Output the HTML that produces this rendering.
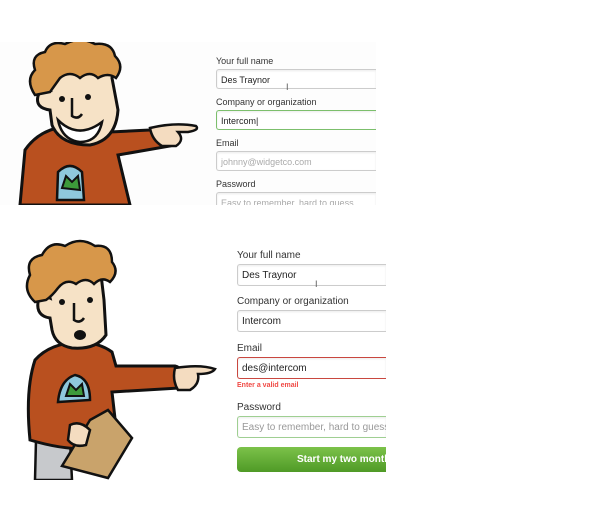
<!DOCTYPE html>
<html><head><meta charset="utf-8"><style>
*{margin:0;padding:0;box-sizing:border-box}
body{width:590px;height:523px;background:#fff;position:relative;overflow:hidden;font-family:"Liberation Sans",Arial,sans-serif}
.p{position:absolute;overflow:hidden}
.l{position:absolute;color:#333;white-space:nowrap}
.i{position:absolute;border:1px solid #ccc;border-right:none;border-radius:3px 0 0 3px;background:#fff;color:#222;white-space:nowrap;overflow:hidden;box-shadow:inset 0 1px 2px rgba(0,0,0,.08)}
svg{position:absolute}
</style></head><body>
<div class="p" style="left:0;top:42px;width:376px;height:163px;background:#fdfdfd">
<svg width="376" height="163" viewBox="0 42 376 163" style="left:0;top:0">
 <path d="M20 205 L25 150 Q40 128 70 126 Q95 125 110 132 L150 130 Q165 128 172 134 L170 146 L118 155 L130 205 Z" fill="#b9501f" stroke="#111" stroke-width="3"/>
 <path d="M150 128 Q175 122 196 126 Q200 130 188 132 L178 132 Q185 140 176 146 L162 146 Q152 140 150 128Z" fill="#f4dcc0" stroke="#111" stroke-width="2.5"/>
 <path d="M57 200 L58 172 Q70 160 82 172 L84 200 Z" fill="#8fc8dc" stroke="#111" stroke-width="2.5"/>
 <path d="M62 188 L66 176 L72 182 L78 176 L80 190 Z" fill="#3d9a3a" stroke="#111" stroke-width="2"/>
 <path d="M45 80 Q42 58 60 55 Q80 45 100 55 Q118 60 112 78 L118 110 Q116 140 90 145 Q60 145 52 125 L50 110 Q35 108 38 96 Q40 88 50 90Z" fill="#f6e2c6" stroke="#111" stroke-width="3"/>
 <path d="M35 95 Q25 80 35 70 Q30 55 45 52 Q50 40 65 44 Q80 36 95 44 Q112 42 115 56 Q125 66 116 78 Q108 72 98 78 Q90 70 80 78 Q70 70 60 78 Q55 85 50 92 Z" fill="#d7974a" stroke="#111" stroke-width="2.5"/>
 <circle cx="62" cy="99" r="3" fill="#111"/><circle cx="88" cy="97" r="3" fill="#111"/>
 <path d="M72 98 L72 116 Q78 120 82 114" fill="none" stroke="#111" stroke-width="2.5"/>
 <path d="M58 120 Q78 140 102 122 Q98 142 80 142 Q62 140 58 120Z" fill="#fff" stroke="#111" stroke-width="2.5"/>
</svg>
<div class="l" style="left:216px;top:14px;font-size:9px">Your full name</div>
<div class="i" style="left:216px;top:27px;width:160px;height:20px;font-size:9px;padding:5px 0 0 4px">Des Traynor</div>
<div class="l" style="left:286px;top:40px;font-size:9px;color:#555">I</div>
<div class="l" style="left:216px;top:55px;font-size:9px">Company or organization</div>
<div class="i" style="left:216px;top:68px;width:160px;height:20px;font-size:9px;padding:5px 0 0 4px;border-color:#7cbf6c">Intercom|</div>
<div class="l" style="left:216px;top:96px;font-size:9px">Email</div>
<div class="i" style="left:216px;top:109px;width:160px;height:20px;font-size:9px;padding:5px 0 0 4px;color:#aaa">johnny@widgetco.com</div>
<div class="l" style="left:216px;top:137px;font-size:9px">Password</div>
<div class="i" style="left:216px;top:150px;width:160px;height:20px;font-size:9px;padding:5px 0 0 4px;color:#aaa">Easy to remember, hard to guess</div>
</div>

<div class="p" style="left:0;top:232px;width:386px;height:248px;background:#fff">
<svg width="386" height="248" viewBox="0 232 386 248" style="left:0;top:0">
 <path d="M35 480 L36 440 L70 440 L72 480Z" fill="#c7c9cc" stroke="#111" stroke-width="2.5"/>
 <path d="M30 440 Q25 390 35 360 Q50 343 80 342 Q100 343 112 352 L116 366 L175 366 Q185 368 180 388 L112 392 L118 445 Q80 455 30 440Z" fill="#b9501f" stroke="#111" stroke-width="3"/>
 <path d="M175 368 Q200 364 215 369 Q212 374 198 374 Q200 384 190 390 L178 390 Q172 380 175 368Z" fill="#f4dcc0" stroke="#111" stroke-width="2.5"/>
 <path d="M58 402 Q60 380 75 375 Q90 378 90 400 Z" fill="#8fc8dc" stroke="#111" stroke-width="2.5"/>
 <path d="M66 396 L70 384 L76 390 L82 384 L84 396 Z" fill="#3d9a3a" stroke="#111" stroke-width="2"/>
 <path d="M90 420 L108 410 L132 438 L108 478 L62 466 Z" fill="#c9a36b" stroke="#111" stroke-width="2.5"/>
 <path d="M70 425 Q80 420 90 430 L86 445 Q74 448 68 440Z" fill="#f4dcc0" stroke="#111" stroke-width="2.5"/>
 <path d="M48 290 Q44 270 58 266 Q80 256 100 266 L104 300 L106 335 Q96 350 72 348 Q55 345 52 330 L50 318 Q36 316 38 302 Q42 294 50 298Z" fill="#f6e2c6" stroke="#111" stroke-width="3"/>
 <path d="M35 302 Q22 290 30 275 Q25 258 42 255 Q50 240 65 246 Q80 236 95 246 Q112 244 112 262 Q120 272 110 282 Q102 276 94 284 Q86 276 76 284 Q66 278 58 288 Q52 296 46 300Z" fill="#d7974a" stroke="#111" stroke-width="2.5"/>
 <circle cx="62" cy="302" r="3" fill="#111"/><circle cx="90" cy="300" r="3" fill="#111"/>
 <path d="M74 303 L74 320 Q80 324 84 318" fill="none" stroke="#111" stroke-width="2.5"/>
 <ellipse cx="80" cy="335" rx="6" ry="5" fill="#111"/>
</svg>
<div class="l" style="left:237px;top:18px;font-size:10px">Your full name</div>
<div class="i" style="left:237px;top:32px;width:149px;height:22px;font-size:10px;padding:5px 0 0 4px">Des Traynor</div>
<div class="l" style="left:315px;top:47px;font-size:9px;color:#555">I</div>
<div class="l" style="left:237px;top:64px;font-size:10px">Company or organization</div>
<div class="i" style="left:237px;top:78px;width:149px;height:22px;font-size:10px;padding:5px 0 0 4px">Intercom</div>
<div class="l" style="left:237px;top:111px;font-size:10px">Email</div>
<div class="i" style="left:237px;top:125px;width:149px;height:22px;font-size:10px;padding:5px 0 0 4px;border-color:#c9473f">des@intercom</div>
<div class="l" style="left:237px;top:150px;font-size:7px;font-weight:bold;color:#f04a45">Enter a valid email</div>
<div class="l" style="left:237px;top:170px;font-size:10px">Password</div>
<div class="i" style="left:237px;top:184px;width:149px;height:22px;font-size:10px;padding:5px 0 0 4px;color:#999;border-color:#9fcf92">Easy to remember, hard to guess</div>
<div style="position:absolute;left:237px;top:215px;width:149px;height:25px;border-radius:4px 0 0 4px;background:linear-gradient(#7cc24a,#4f9a26);color:#fff;font-size:10px;font-weight:bold;padding:7px 0 0 60px;white-space:nowrap;overflow:hidden">Start my two month</div>
</div>
</body></html>
